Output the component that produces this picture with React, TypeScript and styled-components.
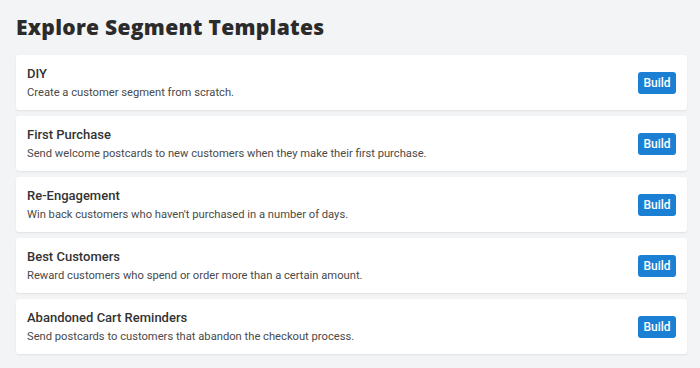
import { createGlobalStyle } from "styled-components"
import styled from "styled-components"

const GlobalStyle = createGlobalStyle`
  html, body {
    margin: 0;
    padding: 0;
    background: #f3f4f6;
  }
  body {
    font-family: Roboto, "Liberation Sans", sans-serif;
    color: #333;
  }
`

const Page = styled.div`
  padding: 14px 13px 14px 16px;
`

const Heading = styled.h1`
  margin: 0 0 15px;
  font-family: "Open Sans", "DejaVu Sans", sans-serif;
  font-weight: 800;
  font-size: 21px;
  line-height: 26px;
  letter-spacing: 0.3px;
  color: #2b2b2b;
`

const List = styled.div`
  display: flex;
  flex-direction: column;
  gap: 6px;
`

const Card = styled.div`
  height: 55px;
  box-sizing: border-box;
  display: flex;
  align-items: center;
  justify-content: space-between;
  padding: 0 11px;
  background: #fff;
  border-radius: 3px;
  box-shadow: 0 1px 2px rgba(0, 0, 0, 0.08);
`

const Info = styled.div`
  display: flex;
  flex-direction: column;
  gap: 3px;
`

const Title = styled.div`
  font-size: 13px;
  font-weight: 500;
  line-height: 17px;
  color: #333;
`

const Description = styled.div`
  font-size: 11.2px;
  line-height: 16px;
  color: #4a4a4a;
`

const BuildButton = styled.button`
  width: 38px;
  height: 22px;
  padding: 0;
  border: none;
  border-radius: 3px;
  background: #1b7fd4;
  color: #fff;
  font-family: Roboto, "Liberation Sans", sans-serif;
  font-size: 12px;
  font-weight: 500;
  cursor: pointer;
`

const templates = [
  { title: "DIY", description: "Create a customer segment from scratch." },
  {
    title: "First Purchase",
    description:
      "Send welcome postcards to new customers when they make their first purchase.",
  },
  {
    title: "Re-Engagement",
    description: "Win back customers who haven't purchased in a number of days.",
  },
  {
    title: "Best Customers",
    description:
      "Reward customers who spend or order more than a certain amount.",
  },
  {
    title: "Abandoned Cart Reminders",
    description: "Send postcards to customers that abandon the checkout process.",
  },
]

const App = () => (
  <>
    <GlobalStyle />
    <Page>
      <Heading>Explore Segment Templates</Heading>
      <List>
        {templates.map((t) => (
          <Card key={t.title}>
            <Info>
              <Title>{t.title}</Title>
              <Description>{t.description}</Description>
            </Info>
            <BuildButton>Build</BuildButton>
          </Card>
        ))}
      </List>
    </Page>
  </>
)

export default App
